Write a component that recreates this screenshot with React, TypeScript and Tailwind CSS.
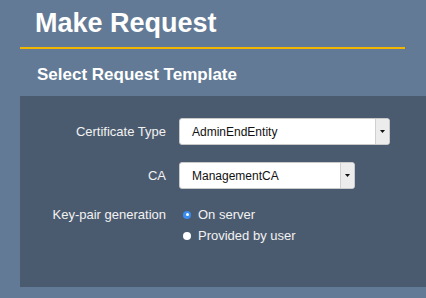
export default function App() {
  const font = { fontFamily: '"Liberation Sans", Arial, sans-serif' };
  return (
    <div className="w-[426px] h-[298px] bg-[#627a95] overflow-hidden text-white" style={font}>
      <h1 className="pt-[10px] pl-[35px] text-[27px] leading-none font-bold">Make Request</h1>
      <div className="mt-[10px] ml-[20px] w-[385px] h-[2px] bg-[#f2b600]" />
      <h2 className="mt-[17px] pl-[37px] text-[17px] leading-none font-bold">Select Request Template</h2>

      <div className="mt-[13px] ml-[20px] h-[191px] bg-[#4b5b6f] pt-[22px]">
        <div className="grid grid-cols-[146px_1fr] gap-x-[13px] items-center text-[13px] text-[#f2f2f2]">
          <span className="text-right">Certificate Type</span>
          <Select value="AdminEndEntity" width="w-[211px]" />

          <span className="text-right mt-[17px]">CA</span>
          <div className="mt-[17px]">
            <Select value="ManagementCA" width="w-[176px]" />
          </div>

          <span className="text-right self-start mt-[15px] leading-[21px]">Key-pair generation</span>
          <div className="mt-[15px] flex flex-col pl-[4px] leading-[21px]">
            <label className="flex items-center gap-[7px]">
              <span className="w-[8px] h-[8px] rounded-full bg-[#3a8cf0] flex items-center justify-center">
                <span className="w-[3px] h-[3px] rounded-full bg-white" />
              </span>
              On server
            </label>
            <label className="flex items-center gap-[7px]">
              <span className="w-[8px] h-[8px] rounded-full bg-white" />
              Provided by user
            </label>
          </div>
        </div>
      </div>
    </div>
  );
}

function Select({ value, width }: { value: string; width: string }) {
  return (
    <div className={`${width} h-[27px] flex bg-white border border-[#c9c9c9] rounded-[3px] overflow-hidden text-[12px] text-[#111]`}>
      <span className="flex-1 flex items-center pl-[12px]">{value}</span>
      <span className="w-[14px] flex items-center justify-center bg-[#ececec] border-l border-[#d0d0d0]">
        <svg width="5" height="3" viewBox="0 0 5 3">
          <path d="M0 0H5L2.5 3Z" fill="#111" />
        </svg>
      </span>
    </div>
  );
}
